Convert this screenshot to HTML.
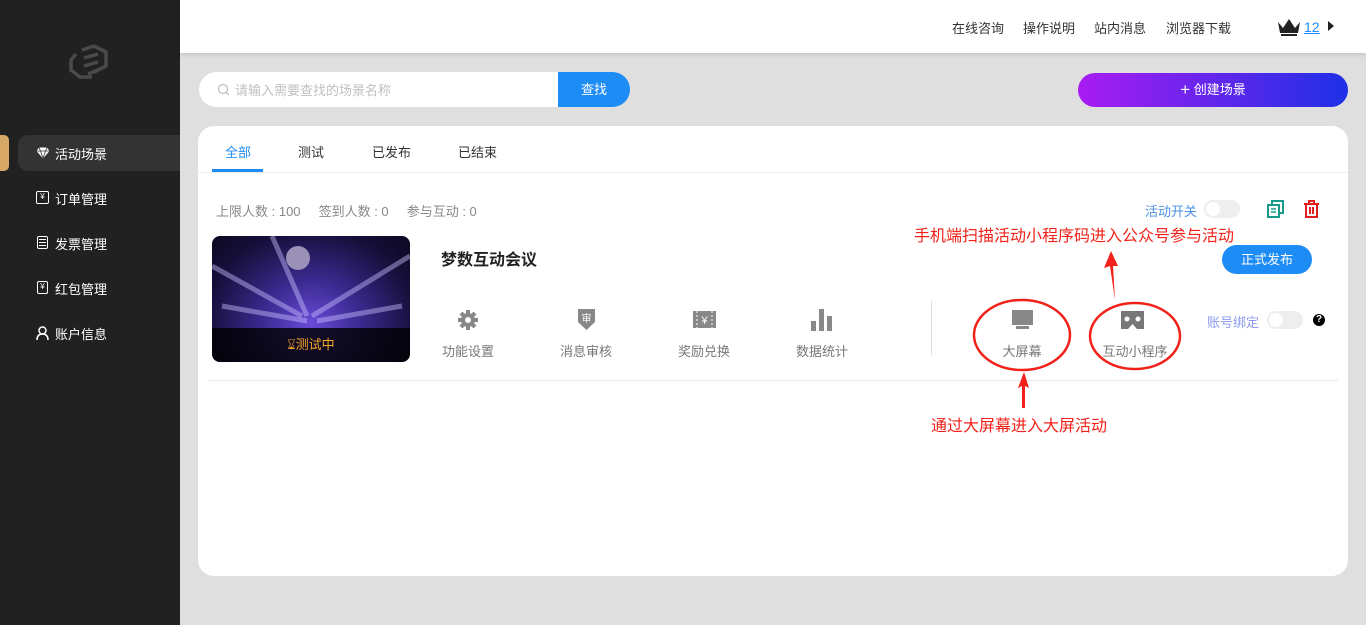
<!DOCTYPE html>
<html><head><meta charset="utf-8"><style>
*{margin:0;padding:0;box-sizing:border-box}
body{width:1366px;height:625px;background:#dfdfdf;font-family:"Liberation Sans","Noto Sans CJK SC",sans-serif;font-size:13px;color:#333;position:relative;overflow:hidden}
.a{position:absolute;white-space:nowrap}
.side{left:0;top:0;width:180px;height:625px;background:#212121}
.top{left:180px;top:0;width:1186px;height:53px;background:#fff;box-shadow:0 2px 4px rgba(0,0,0,.12)}
.nav{color:#fff;font-size:13px}
.ic{position:absolute;left:36px}
.tog{width:36px;height:18px;border-radius:9px;background:#eee}
.tog:after{content:"";position:absolute;left:2px;top:2px;width:14px;height:14px;border-radius:50%;background:#fff}
.lbl{color:#777;font-size:13px;transform:translateX(-50%)}
</style></head><body>
<div class="a side"></div>
<svg class="a" style="left:68px;top:44px" width="44" height="38" viewBox="0 0 44 38"><g fill="none" stroke="#4a4a4a" stroke-width="3.5"><path d="M14 6 L26 2 L38 8 L38 22 L26 28"/><path d="M8 10 L3 16 L3 26 L12 33 L24 33"/><path d="M16 14 L30 10 M16 22 L30 18 M20 30 L30 26"/></g></svg>
<div class="a" style="left:0;top:135px;width:9px;height:36px;background:#d8a866;border-radius:0 5px 5px 0"></div>
<div class="a" style="left:18px;top:135px;width:162px;height:36px;background:#333;border-radius:10px 0 0 10px"></div>
<svg class="a" style="left:36px;top:147px" width="14" height="12" viewBox="0 0 14 12"><path d="M3 0.5h8l2.5 3.5L7 11.5 0.5 4Z" fill="#fff"/><path d="M0.5 4h13M4.5 4L7 11M9.5 4L7 11M3 0.5L4.5 4M11 0.5L9.5 4" stroke="#333" stroke-width="0.8" fill="none"/></svg>
<div class="a nav" style="left:55px;top:144px">活动场景</div>
<div class="a" style="left:36px;top:191px;width:13px;height:13px;border:1.5px solid #fff;border-radius:2px;font-size:8px;color:#fff;text-align:center;line-height:10px">¥</div>
<div class="a nav" style="left:55px;top:189px">订单管理</div>
<div class="a" style="left:37px;top:236px;width:11px;height:13px;border:1.5px solid #fff;border-radius:2px"><div style="margin:2px 1px;height:1px;background:#fff;box-shadow:0 3px #fff,0 6px #fff"></div></div>
<div class="a nav" style="left:55px;top:234px">发票管理</div>
<div class="a" style="left:37px;top:281px;width:11px;height:13px;border:1.5px solid #fff;border-radius:2px;font-size:8px;color:#fff;text-align:center;line-height:10px">¥</div>
<div class="a nav" style="left:55px;top:279px">红包管理</div>
<svg class="a" style="left:36px;top:326px" width="13" height="14" viewBox="0 0 13 14"><circle cx="6.5" cy="4.5" r="3.5" fill="none" stroke="#fff" stroke-width="1.5"/><path d="M1 14 Q1 8 6.5 8 Q12 8 12 14" fill="none" stroke="#fff" stroke-width="1.5"/></svg>
<div class="a nav" style="left:55px;top:324px">账户信息</div>

<div class="a top"></div>
<div class="a" style="left:952px;top:18px;color:#333">在线咨询</div>
<div class="a" style="left:1023px;top:18px;color:#333">操作说明</div>
<div class="a" style="left:1094px;top:18px;color:#333">站内消息</div>
<div class="a" style="left:1166px;top:18px;color:#333">浏览器下载</div>
<svg class="a" style="left:1277px;top:18px" width="24" height="19" viewBox="0 0 24 19"><path d="M1 4 L6 10 L12 1 L18 10 L23 4 L21 15 L3 15Z" fill="#222"/><rect x="4" y="16" width="16" height="2" fill="#222"/></svg>
<div class="a" style="left:1304px;top:19px;color:#1e8cff;text-decoration:underline;font-size:14px">12</div>
<div class="a" style="left:1328px;top:21px;width:0;height:0;border-left:6px solid #222;border-top:5px solid transparent;border-bottom:5px solid transparent"></div>

<div class="a" style="left:199px;top:72px;width:380px;height:35px;background:#fff;border-radius:18px 0 0 18px"></div>
<svg class="a" style="left:217px;top:83px" width="13" height="13"><circle cx="6" cy="6" r="4.5" fill="none" stroke="#bbb" stroke-width="1.2"/><path d="M9.5 9.5L12 12" stroke="#bbb" stroke-width="1.2"/></svg>
<div class="a" style="left:235px;top:80px;color:#c0c0c0">请输入需要查找的场景名称</div>
<div class="a" style="left:558px;top:72px;width:72px;height:35px;background:#1e8cf5;border-radius:0 18px 18px 0;color:#fff;text-align:center;line-height:35px">查找</div>
<div class="a" style="left:1078px;top:73px;width:270px;height:34px;border-radius:17px;background:linear-gradient(90deg,#a91cf2,#1e30e6);color:#fff;text-align:center;line-height:34px;font-size:13px"><span style="font-size:17px;vertical-align:-1px">+</span> 创建场景</div>

<div class="a" style="left:198px;top:126px;width:1150px;height:450px;background:#fff;border-radius:16px"></div>
<div class="a" style="left:198px;top:172px;width:1150px;height:1px;background:#eee"></div>
<div class="a" style="left:225px;top:142px;color:#1e8cf5">全部</div>
<div class="a" style="left:212px;top:169px;width:51px;height:3px;background:#1e8cf5"></div>
<div class="a" style="left:298px;top:142px">测试</div>
<div class="a" style="left:372px;top:142px">已发布</div>
<div class="a" style="left:458px;top:142px">已结束</div>

<div class="a" style="left:216px;top:201px;color:#888">上限人数 : 100&nbsp;&nbsp;&nbsp;&nbsp;&nbsp;签到人数 : 0&nbsp;&nbsp;&nbsp;&nbsp;&nbsp;参与互动 : 0</div>
<div class="a" style="left:1145px;top:201px;color:#4a90e2">活动开关</div>
<div class="a tog" style="left:1204px;top:200px"></div>
<svg class="a" style="left:1267px;top:200px" width="18" height="18" viewBox="0 0 18 18"><rect x="5" y="1" width="11" height="12" fill="none" stroke="#1a9a8a" stroke-width="2"/><rect x="1" y="5" width="11" height="12" fill="#fff" stroke="#1a9a8a" stroke-width="2"/><path d="M4 9h5M4 12h5" stroke="#1a9a8a" stroke-width="1.5"/></svg>
<svg class="a" style="left:1303px;top:200px" width="17" height="18" viewBox="0 0 17 18"><path d="M1 4h15M6 4V1h5v3" fill="none" stroke="#e02020" stroke-width="2"/><path d="M3 4v13h11V4M7 7v7M10 7v7" fill="none" stroke="#e02020" stroke-width="2"/></svg>

<div class="a" style="left:212px;top:236px;width:198px;height:126px;border-radius:8px;overflow:hidden;background:radial-gradient(ellipse at 50% 70%,#6a4ad8 0%,#3a2a90 35%,#160f3a 75%,#0a0820 100%)">
<svg style="position:absolute;left:0;top:0" width="198" height="126"><g stroke="#c8c0ff" stroke-opacity=".45" stroke-width="5"><path d="M0 30 L90 80"/><path d="M198 20 L100 80"/><path d="M10 70 L95 85"/><path d="M190 70 L105 85"/><path d="M60 0 L95 80"/></g><circle cx="86" cy="22" r="12" fill="#9a90b8"/></svg>
<div style="position:absolute;left:0;top:92px;width:198px;height:34px;background:rgba(0,0,0,.8);color:#f5a623;text-align:center;line-height:34px;font-size:13px">⌛︎测试中</div></div>
<div class="a" style="left:441px;top:246px;font-size:16px;font-weight:bold;color:#222">梦数互动会议</div>

<svg class="a" style="left:457px;top:309px" width="22" height="22" viewBox="0 0 22 22"><g fill="#888"><circle cx="11" cy="11" r="7"/><g stroke="#888" stroke-width="4"><path d="M11 1v20M1 11h20M4 4l14 14M18 4L4 18"/></g></g><circle cx="11" cy="11" r="3" fill="#fff"/></svg>
<svg class="a" style="left:577px;top:308px" width="19" height="23" viewBox="0 0 19 23"><path d="M1 1h17v13l-8.5 8L1 14Z" fill="#888"/><text x="9.5" y="14" fill="#fff" font-size="10" text-anchor="middle" font-family="Noto Sans CJK SC">审</text></svg>
<svg class="a" style="left:693px;top:311px" width="23" height="17" viewBox="0 0 23 17"><rect x="0" y="0" width="23" height="17" fill="#888"/><path d="M4 0v17M19 0v17" stroke="#fff" stroke-dasharray="2 2"/><text x="11.5" y="13" fill="#fff" font-size="11" text-anchor="middle">¥</text></svg>
<svg class="a" style="left:811px;top:309px" width="22" height="22"><rect x="0" y="12" width="5" height="10" fill="#888"/><rect x="8" y="0" width="5" height="22" fill="#888"/><rect x="16" y="7" width="5" height="15" fill="#888"/></svg>
<div class="a lbl" style="left:468px;top:341px">功能设置</div>
<div class="a lbl" style="left:586px;top:341px">消息审核</div>
<div class="a lbl" style="left:704px;top:341px">奖励兑换</div>
<div class="a lbl" style="left:822px;top:341px">数据统计</div>
<div class="a" style="left:931px;top:301px;width:1px;height:54px;background:#ddd"></div>
<svg class="a" style="left:1012px;top:310px" width="21" height="20"><rect x="0" y="0" width="21" height="15" fill="#888"/><rect x="4" y="16" width="13" height="3" fill="#888"/></svg>
<svg class="a" style="left:1121px;top:311px" width="23" height="18" viewBox="0 0 23 18"><path d="M0 0h23v18h-7l-4.5-5-4.5 5H0Z" fill="#777"/><circle cx="6" cy="8" r="2.5" fill="#fff"/><circle cx="17" cy="8" r="2.5" fill="#fff"/></svg>
<div class="a lbl" style="left:1022px;top:341px">大屏幕</div>
<div class="a lbl" style="left:1135px;top:341px">互动小程序</div>
<div class="a" style="left:1222px;top:245px;width:90px;height:29px;border-radius:15px;background:#1e8cf5;color:#fff;text-align:center;line-height:29px">正式发布</div>
<div class="a" style="left:1207px;top:312px;color:#8a9aef">账号绑定</div>
<div class="a tog" style="left:1267px;top:311px"></div>
<div class="a" style="left:1313px;top:314px;width:12px;height:12px;border-radius:50%;background:#000;color:#fff;font-size:10px;font-weight:bold;text-align:center;line-height:12px">?</div>
<div class="a" style="left:208px;top:380px;width:1130px;height:1px;background:#e8e8e8"></div>

<svg class="a" style="left:0;top:0" width="1366" height="625"><g fill="none" stroke="#f2221a" stroke-width="2.5"><ellipse cx="1022" cy="335" rx="48" ry="35"/><ellipse cx="1135" cy="336" rx="45" ry="33"/></g>
<path d="M1115 300 L1110 266 L1104 268 L1111 251 L1118 266 L1113 266 Z" fill="#f2221a"/>
<path d="M1022 408 L1022 386 L1018 388 L1024 372 L1029 388 L1025 386 L1025 408 Z" fill="#f2221a"/></svg>
<div class="a" style="left:914px;top:222px;color:#f2221a;font-size:16px">手机端扫描活动小程序码进入公众号参与活动</div>
<div class="a" style="left:931px;top:412px;color:#f2221a;font-size:16px">通过大屏幕进入大屏活动</div>
</body></html>
